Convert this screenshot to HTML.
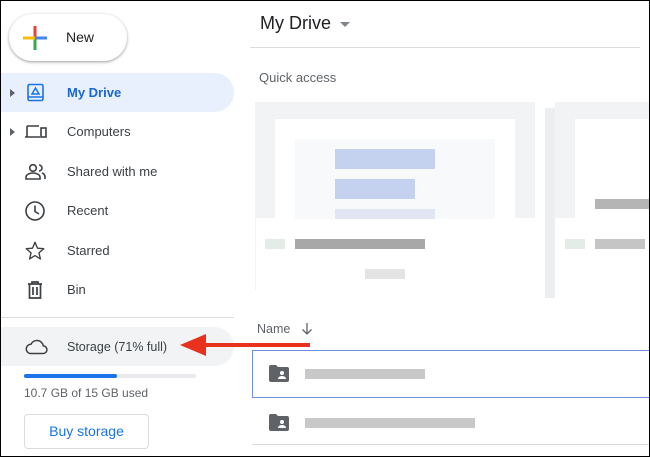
<!DOCTYPE html>
<html><head><style>
*{margin:0;padding:0;box-sizing:border-box}
body{width:650px;height:457px;overflow:hidden;background:#fff;font-family:"Liberation Sans",sans-serif;position:relative;color:#3c4043}
.frame{position:absolute;inset:0;border:1px solid #000;pointer-events:none;z-index:10}
.a{position:absolute}
.new{left:9px;top:14px;width:118px;height:47px;border-radius:24px;box-shadow:0 1px 3px rgba(60,64,67,.35),0 1px 2px rgba(60,64,67,.2);background:#fff}
.nav{position:absolute;left:0;width:234px;height:39px;font-size:13px;display:flex;align-items:center}
.nav span{position:absolute;left:67px}
.nav svg{position:absolute;left:24px}
.tri{position:absolute;left:10px;width:0;height:0;border-top:4px solid transparent;border-bottom:4px solid transparent;border-left:5px solid #5f6368}
.px{position:absolute;height:10px}
</style></head><body>
<div class="frame"></div>
<div class="a new">
<svg class="a" style="left:14px;top:12px" width="24" height="24" viewBox="0 0 24 24"><rect x="10.5" y="0" width="3" height="12" fill="#ea4335"/><rect x="10.5" y="12" width="3" height="12" fill="#34a853"/><rect x="0" y="10.5" width="12" height="3" fill="#fbbc04"/><rect x="12" y="10.5" width="12" height="3" fill="#4285f4"/></svg>
<span class="a" style="left:57px;top:15px;font-size:14px;color:#202124">New</span>
</div>
<div class="nav" style="top:73px;background:#e8f0fe;border-radius:0 20px 20px 0;color:#1967d2;font-weight:bold">
<div class="tri"></div>
<svg width="20" height="20" viewBox="0 0 20 20" style="left:26px"><rect x="2" y="1.5" width="15" height="16" rx="1.5" fill="none" stroke="#1a73e8" stroke-width="1.6"/><line x1="2" y1="14" x2="17" y2="14" stroke="#1a73e8" stroke-width="1.5"/><path d="M9.5 5 L13 11 H6 Z" fill="none" stroke="#1a73e8" stroke-width="1.5"/></svg>
<span>My Drive</span></div>
<div class="nav" style="top:112px"><div class="tri"></div>
<svg width="24" height="20" viewBox="0 0 24 20"><path d="M3 4H15M3 4V15M1 15H16" fill="none" stroke="#3c4043" stroke-width="1.6"/><rect x="17" y="6" width="5" height="9" fill="none" stroke="#3c4043" stroke-width="1.6"/></svg>
<span>Computers</span></div>
<div class="nav" style="top:152px">
<svg width="24" height="20" viewBox="0 0 24 20"><circle cx="9" cy="6" r="3.3" fill="none" stroke="#3c4043" stroke-width="1.6"/><path d="M2 17v-2c0-2.5 4-4 7-4s7 1.5 7 4v2z" fill="none" stroke="#3c4043" stroke-width="1.6"/><path d="M15 3a3 3 0 0 1 0 6M18 11c2 .7 3 2 3 4v2" fill="none" stroke="#3c4043" stroke-width="1.6"/></svg>
<span>Shared with me</span></div>
<div class="nav" style="top:191px">
<svg width="22" height="22" viewBox="0 0 22 22"><circle cx="11" cy="11" r="9" fill="none" stroke="#3c4043" stroke-width="1.6"/><path d="M11 5.5V11.5L15 14" fill="none" stroke="#3c4043" stroke-width="1.6"/></svg>
<span>Recent</span></div>
<div class="nav" style="top:231px">
<svg width="22" height="22" viewBox="0 0 24 24"><path d="M12 2.5l2.7 6.4 6.8.6-5.2 4.5 1.6 6.7L12 17l-5.9 3.7 1.6-6.7-5.2-4.5 6.8-.6z" fill="none" stroke="#3c4043" stroke-width="1.5" stroke-linejoin="round"/></svg>
<span>Starred</span></div>
<div class="nav" style="top:270px">
<svg width="22" height="22" viewBox="0 0 22 22"><path d="M4 5H18M8 5V3H14V5M5.5 5V19H16.5V5M9 8V16M13 8V16" fill="none" stroke="#3c4043" stroke-width="1.7"/></svg>
<span>Bin</span></div>
<div class="a" style="left:0;top:317px;width:234px;height:1px;background:#dadce0"></div>
<div class="nav" style="top:327px;background:#f1f3f4;border-radius:0 20px 20px 0">
<svg width="24" height="18" viewBox="0 0 24 18"><path d="M6 15.5H19a3.8 3.8 0 0 0 .3-7.6A6.5 6.5 0 0 0 7 6.2 4.7 4.7 0 0 0 6 15.5z" fill="none" stroke="#3c4043" stroke-width="1.5"/></svg>
<span style="font-size:12.5px">Storage (71% full)</span></div>
<div class="a" style="left:24px;top:374px;width:172px;height:4px;background:#e8eaed;border-radius:2px"></div>
<div class="a" style="left:24px;top:374px;width:93px;height:4px;background:#1a73e8;border-radius:2px"></div>
<div class="a" style="left:24px;top:386px;font-size:12px;color:#5f6368">10.7 GB of 15 GB used</div>
<div class="a" style="left:24px;top:414px;width:125px;height:35px;border:1px solid #dadce0;border-radius:4px;color:#1a73e8;font-size:14px;text-align:center;line-height:33px">Buy storage</div>

<div class="a" style="left:260px;top:13px;font-size:18px;color:#202124">My Drive</div>
<div class="a" style="left:340px;top:22px;border-left:5px solid transparent;border-right:5px solid transparent;border-top:5px solid #80868b"></div>
<div class="a" style="left:250px;top:47px;width:390px;height:1px;background:#dadce0"></div>
<div class="a" style="left:259px;top:70px;font-size:13px;color:#5f6368">Quick access</div>
<div class="a" style="left:255px;top:102px;width:280px;height:188px;background:#fff;border-left:1px solid #f1f3f4"></div>
<div class="a" style="left:255px;top:102px;width:280px;height:116px;background:#f1f3f4"></div>
<div class="a" style="left:275px;top:119px;width:240px;height:100px;background:#fff"></div>
<div class="a" style="left:295px;top:139px;width:200px;height:80px;background:#f8f9fa"></div>
<div class="a" style="left:335px;top:149px;width:100px;height:20px;background:#c5d2ef"></div>
<div class="a" style="left:335px;top:179px;width:80px;height:20px;background:#c5d2ef"></div>
<div class="a" style="left:335px;top:209px;width:100px;height:10px;background:#e1e5f4"></div>
<div class="px" style="left:295px;top:239px;width:130px;background:#a8a8a8"></div>
<div class="px" style="left:265px;top:239px;width:20px;background:#e3ece6"></div>
<div class="px" style="left:365px;top:269px;width:40px;background:#e4e4e4"></div>
<div class="a" style="left:545px;top:108px;width:10px;height:190px;background:#eceef0"></div>
<div class="a" style="left:555px;top:102px;width:95px;height:116px;background:#f1f3f4"></div>
<div class="a" style="left:575px;top:119px;width:75px;height:100px;background:#fff"></div>
<div class="px" style="left:595px;top:199px;width:55px;background:#b5b5b5"></div>
<div class="px" style="left:595px;top:239px;width:50px;background:#c5c5c5"></div>
<div class="px" style="left:565px;top:239px;width:20px;background:#e3ece6"></div>
<div class="a" style="left:257px;top:322px;font-size:12.5px;color:#5f6368">Name</div>
<svg class="a" style="left:301px;top:322px" width="12" height="14" viewBox="0 0 12 14"><path d="M6 1V12M1.5 7.5L6 12 10.5 7.5" fill="none" stroke="#5f6368" stroke-width="1.3"/></svg>
<div class="a" style="left:252px;top:350px;width:400px;height:48px;border:1px solid #6e8fdd"></div>
<div class="a" style="left:252px;top:444px;width:398px;height:1px;background:#dadce0"></div>
<svg class="a" style="left:269px;top:365px" width="20" height="17" viewBox="0 0 20 17"><path d="M0 2a2 2 0 0 1 2-2h5l2 2h9a2 2 0 0 1 2 2v11a2 2 0 0 1-2 2H2a2 2 0 0 1-2-2z" fill="#5f6368"/><circle cx="13" cy="8" r="2" fill="#fff"/><path d="M9 14c0-2 2-3 4-3s4 1 4 3z" fill="#fff"/></svg>
<svg class="a" style="left:269px;top:414px" width="20" height="17" viewBox="0 0 20 17"><path d="M0 2a2 2 0 0 1 2-2h5l2 2h9a2 2 0 0 1 2 2v11a2 2 0 0 1-2 2H2a2 2 0 0 1-2-2z" fill="#5f6368"/><circle cx="13" cy="8" r="2" fill="#fff"/><path d="M9 14c0-2 2-3 4-3s4 1 4 3z" fill="#fff"/></svg>
<div class="px" style="left:305px;top:369px;width:120px;background:#c8c8c8"></div>
<div class="px" style="left:305px;top:418px;width:170px;background:#c8c8c8"></div>
<svg class="a" style="left:178px;top:333px" width="135" height="24" viewBox="0 0 135 24"><path d="M2 12L28 1V23Z" fill="#e8321d"/><rect x="26" y="10" width="106" height="4" fill="#e8321d"/></svg>
</body></html>
